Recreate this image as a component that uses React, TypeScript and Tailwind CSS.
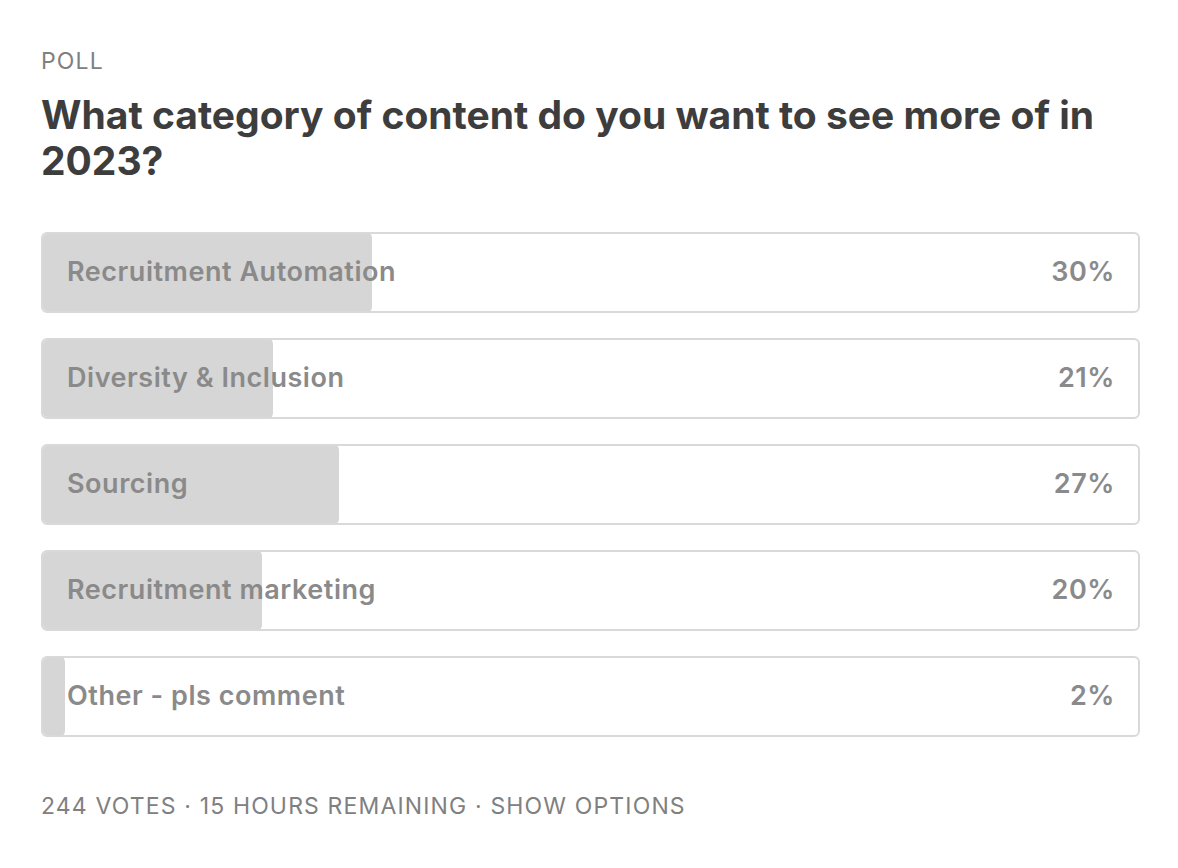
const options = [
  { label: "Recruitment Automation", pct: 30 },
  { label: "Diversity & Inclusion", pct: 21 },
  { label: "Sourcing", pct: 27 },
  { label: "Recruitment marketing", pct: 20 },
  { label: "Other - pls comment", pct: 2 },
]

export default function App() {
  return (
    <div
      className="min-h-[868px] bg-white pl-[41px] pr-[38px] pt-[48px]"
      style={{ fontFamily: "Inter, 'Noto Sans', sans-serif" }}
    >
      <div className="text-[23px] leading-[26px] tracking-[0.05em] text-[#808080]">POLL</div>
      <h1 className="mt-[18px] text-[39px] font-bold leading-[46px] text-[#3d3d3d]">
        What category of content do you want to see more of in 2023?
      </h1>
      <div className="mt-[48px] flex flex-col gap-[25px]">
        {options.map((o) => (
          <div
            key={o.label}
            className="relative h-[81px] overflow-hidden rounded-[6px] border-2 border-[#d9d9d9]"
          >
            <div
              className="absolute -left-[2px] -top-[2px] -bottom-[2px] rounded-[6px] bg-[#d6d6d6]"
              style={{ width: `calc(${o.pct}% + 2px)` }}
            />
            <div className="relative flex h-full items-center justify-between pl-[24px] pr-[23px] text-[27px] font-semibold tracking-[0.02em] text-[#8a8a8a]">
              <span>{o.label}</span>
              <span>{o.pct}%</span>
            </div>
          </div>
        ))}
      </div>
      <div className="mt-[56px] text-[23px] leading-[26px] tracking-[0.05em] text-[#808080]">
        244 VOTES · 15 HOURS REMAINING · SHOW OPTIONS
      </div>
    </div>
  )
}
